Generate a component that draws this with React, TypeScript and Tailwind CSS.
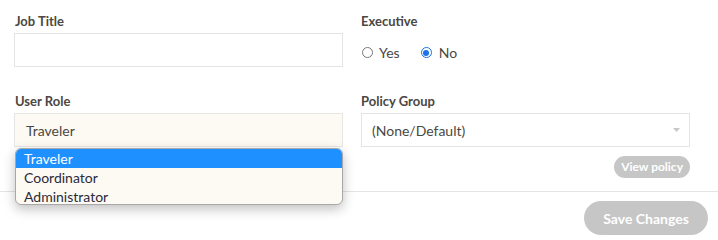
import React from "react";

const font = { fontFamily: "Lato, 'Noto Sans', sans-serif" };

export default function App() {
  return (
    <div className="w-[718px] h-[240px] bg-white overflow-hidden relative text-[#4a4a4a]" style={font}>
      <div className="grid grid-cols-[329px_329px] gap-x-[18px] px-[14px] pt-[13px]">
        <div className="flex flex-col">
          <label className="text-[13px] font-bold leading-[16px] pl-[1px] text-[#4b4743]">Job Title</label>
          <div className="mt-[4px] h-[34px] border border-[#e4e4e4] bg-white" />
        </div>
        <div className="flex flex-col">
          <label className="text-[13px] font-bold leading-[16px] text-[#4b4743]">Executive</label>
          <div className="mt-[13px] flex items-center text-[14px] text-[#4b4743]">
            <span className="w-[11px] h-[11px] rounded-full border border-[#767676] bg-white ml-[1px]" />
            <span className="ml-[6px]">Yes</span>
            <span className="ml-[21px] w-[11px] h-[11px] rounded-full border border-[#1a73e8] bg-white flex items-center justify-center">
              <span className="w-[6px] h-[6px] rounded-full bg-[#1a73e8]" />
            </span>
            <span className="ml-[7px]">No</span>
          </div>
        </div>

        <div className="flex flex-col mt-[26px]">
          <label className="text-[13px] font-bold leading-[16px] pl-[1px] text-[#4b4743]">User Role</label>
          <div className="mt-[4px] h-[34px] border border-[#e8e6e2] bg-[#fdf9f3] flex items-center pl-[11px] text-[14px] text-[#4b4743]">
            Traveler
          </div>
        </div>
        <div className="flex flex-col mt-[26px]">
          <label className="text-[13px] font-bold leading-[16px] text-[#4b4743]">Policy Group</label>
          <div className="mt-[4px] h-[34px] border border-[#e4e4e4] bg-white flex items-center justify-between pl-[10px] pr-[9px] text-[14px] text-[#4b4743]">
            <span>(None/Default)</span>
            <svg width="7" height="4" viewBox="0 0 7 4">
              <path d="M0 0 L7 0 L3.5 4 Z" fill="#c8c8c8" />
            </svg>
          </div>
          <div className="flex justify-end mt-[9px]">
            <button className="h-[22px] px-[7px] rounded-full bg-[#c6c6c6] text-white text-[12px] font-bold leading-[22px]">
              View policy
            </button>
          </div>
        </div>
      </div>

      <div className="mt-[13px] border-t border-[#e4e4e4]" />
      <div className="flex justify-end pr-[10px] pt-[9px]">
        <button className="h-[34px] w-[124px] rounded-full bg-[#c6c6c6] text-white text-[14px] font-bold">
          Save Changes
        </button>
      </div>

      <div className="absolute left-[15px] top-[148px] w-[328px] h-[57px] rounded-[6px] border border-[#a8a8a8] bg-[#fdf9f3] shadow-[0_4px_12px_rgba(0,0,0,0.25)] overflow-hidden text-[14px] leading-[19px] text-[#2b2b3a]">
        <div className="bg-[#1e90ff] text-white pl-[8px]">Traveler</div>
        <div className="pl-[8px]">Coordinator</div>
        <div className="pl-[8px]">Administrator</div>
      </div>
    </div>
  );
}
